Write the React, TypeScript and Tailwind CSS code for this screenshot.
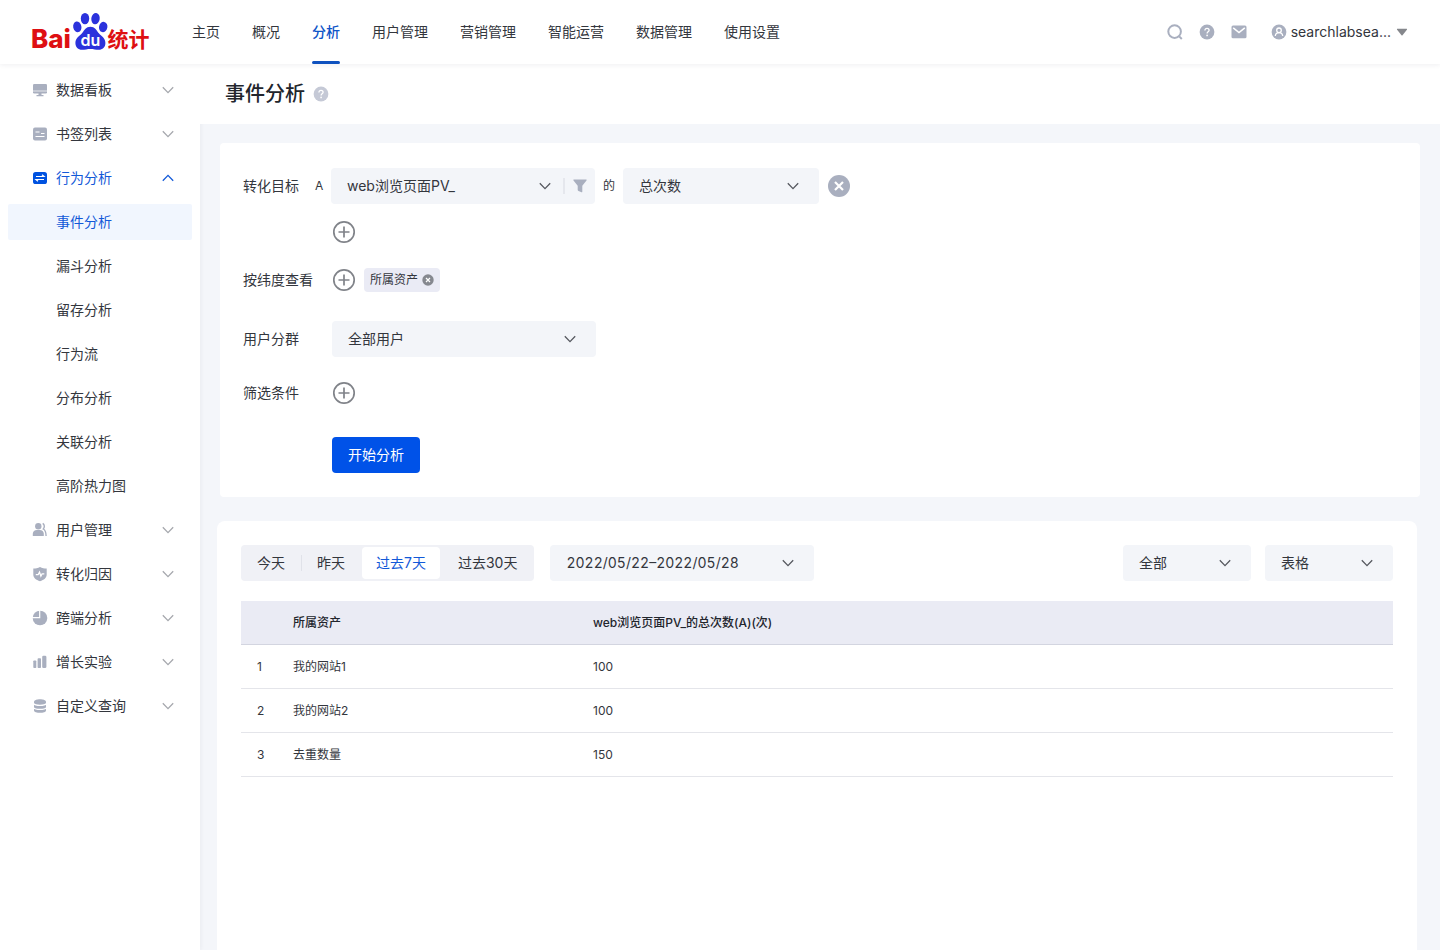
import React, { useState } from 'react';

type IconProps = { className?: string };

const pageFont = "font-['Inter','Noto_Sans_CJK_SC',sans-serif]";

function Logo() {
  return (
    <svg width="122" height="44" viewBox="-3 -1 122 44" role="img" aria-label="Baidu统计" className="shrink-0">
      <text x="-1" y="37" fontFamily="Inter, sans-serif" fontSize="26" fontWeight="800" fill="#de0f12">Bai</text>
      <g fill="#2b32dc" transform="translate(0 1)">
        <ellipse cx="45.300" cy="14.800" rx="4.100" ry="5.400" transform="rotate(-12 45.300 14.800)" />
        <ellipse cx="53" cy="6.600" rx="4.200" ry="5.700" />
        <ellipse cx="63.500" cy="6.600" rx="4.200" ry="5.700" transform="rotate(8 63.500 6.600)" />
        <ellipse cx="71.200" cy="15" rx="4.200" ry="5.200" transform="rotate(12 71.200 15)" />
        <path d="M58.400 14.800c4.400 0 6 3.500 8.200 6.200 2.800 3.200 6.800 5 6.800 10 0 4.400-3 6.800-6.600 6.800-3 0-5.200-.8-8.400-.8s-5.400.8-8.400.8c-3.800 0-6.600-2.600-6.600-6.800 0-5 4-6.800 6.800-10 2.200-2.700 3.800-6.200 8.200-6.200z" />
      </g>
      <text x="58.500" y="35" textAnchor="middle" fontFamily="Inter, sans-serif" fontSize="16" fontWeight="600" fill="#fff">du</text>
      <text x="75.500" y="36" fontFamily="Noto Sans CJK SC, sans-serif" fontSize="21" fontWeight="700" fill="#de0f12">统计</text>
    </svg>
  );
}

function Chevron({ className = '' }: IconProps) {
  return (
    <svg width="12" height="8" viewBox="0 0 12 8" fill="none" stroke="currentColor" strokeWidth="1.300" aria-hidden="true" className={className}>
      <path d="M.8 1.200 6 6.600l5.200-5.400" />
    </svg>
  );
}

function HelpIcon({ className = '' }: IconProps) {
  return (
    <svg width="16" height="16" viewBox="0 0 16 16" aria-hidden="true" className={className}>
      <circle cx="8" cy="8" r="7.400" fill="currentColor" />
      <path d="M5.900 6.500c0-1.300.9-2.100 2.100-2.100s2.100.8 2.100 1.900c0 1.500-2 1.600-2 3.100" fill="none" stroke="#fff" strokeWidth="1.300" />
      <circle cx="8.100" cy="11.400" r=".85" fill="#fff" />
    </svg>
  );
}

function SearchIcon() {
  return (
    <svg width="16" height="16" viewBox="0 0 16 16" fill="none" stroke="currentColor" strokeWidth="2" aria-hidden="true">
      <circle cx="7.600" cy="7.600" r="6.300" />
      <path d="m12.200 12.400 2.600 2.600" />
    </svg>
  );
}

function MailIcon() {
  return (
    <svg width="16" height="16" viewBox="0 0 16 16" aria-hidden="true">
      <rect x=".5" y="1.500" width="15" height="12.800" rx="1.500" fill="currentColor" />
      <path d="m2.200 3.800 5.800 4.800 5.800-4.800" fill="none" stroke="#fff" strokeWidth="1.500" />
    </svg>
  );
}

function UserIcon() {
  return (
    <svg width="16" height="16" viewBox="0 0 16 16" aria-hidden="true">
      <circle cx="8" cy="8" r="7.400" fill="currentColor" />
      <g fill="none" stroke="#fff" strokeWidth="1.300">
        <circle cx="8" cy="6.300" r="2.300" />
        <path d="M4.300 12c.2-2 1.700-3.300 3.700-3.300s3.500 1.300 3.700 3.300" />
      </g>
    </svg>
  );
}

const sideIcons: Record<string, React.ReactNode> = {
  board: (
    <>
      <rect x="1" y="2" width="14" height="9.500" rx="1.300" fill="currentColor" />
      <path d="M1 9h14" stroke="#fff" strokeWidth=".7" />
      <path d="M6.500 11h3v2h2v1.300h-7V13h2z" fill="currentColor" />
    </>
  ),
  bookmark: (
    <>
      <rect x="1" y="1.500" width="14" height="13" rx="2" fill="currentColor" />
      <path d="M3.500 6h4M9 7.500h3.500M3.500 10.500h9" stroke="#fff" strokeWidth="1.200" />
    </>
  ),
  behavior: (
    <>
      <rect x="1" y="2" width="14" height="12" rx="2.600" fill="currentColor" />
      <path d="M4 6.500h8L10 4.800M12 9.500H4l2 1.700" fill="none" stroke="#fff" strokeWidth="1.200" />
    </>
  ),
  users: (
    <>
      <circle cx="6.300" cy="4.300" r="3.200" fill="currentColor" />
      <path d="M.8 14v-2.200c0-2.300 1.800-3.700 4-3.700h3c2.200 0 4 1.400 4 3.700V14z" fill="currentColor" />
      <path d="M10.700 1.400c2 1.300 2.100 3.900.6 5.600 1.900 1 2.700 2.500 2.800 7" fill="none" stroke="currentColor" strokeWidth="1.400" />
    </>
  ),
  shield: (
    <>
      <path d="M8 .9c2.200 1.200 4.300 1.700 6.700 1.700v6c0 3.500-2.700 5.300-6.700 6.700-4-1.400-6.700-3.200-6.700-6.700v-6C3.700 2.600 5.800 2.100 8 .9z" fill="currentColor" />
      <path d="M3.800 8.700h2.300l1.400-2.500 1.400 4 1.200-2.400h2.200" fill="none" stroke="#fff" strokeWidth="1.300" />
    </>
  ),
  pie: (
    <>
      <circle cx="8" cy="8" r="7.300" fill="currentColor" />
      <path d="M7.700 0v7.700H0" fill="none" stroke="#fff" strokeWidth="1.200" />
    </>
  ),
  bars: (
    <g fill="currentColor">
      <rect x="1.300" y="6.500" width="3" height="7.500" rx=".8" />
      <rect x="5.600" y="4.300" width="3.400" height="9.700" rx=".8" />
      <rect x="10.200" y="1.800" width="4.200" height="12.200" rx="1.300" />
    </g>
  ),
  database: (
    <>
      <path d="M2 3.800C2 .4 14 .4 14 3.800v8.600c0 3.200-12 3.200-12 0z" fill="currentColor" />
      <path d="M1.500 5.500c2 2.400 11 2.400 13 0M1.500 9.600c2 2.400 11 2.400 13 0" fill="none" stroke="#fff" strokeWidth="1.200" />
    </>
  ),
};

function MenuRow({ icon, label, open = false }: { icon: string; label: string; open?: boolean }) {
  return (
    <button
      type="button"
      aria-expanded={open}
      className={`flex h-11 w-full items-center gap-2 pr-[26px] pl-8 text-sm ${open ? 'text-[#1259d8]' : 'text-[#33363d]'}`}
    >
      <svg width="16" height="16" viewBox="0 0 16 16" aria-hidden="true" className={open ? 'text-[#0052e0]' : 'text-[#a9afbf]'}>
        {sideIcons[icon]}
      </svg>
      {label}
      <Chevron className={open ? 'ml-auto rotate-180' : 'ml-auto text-[#a6a8ae]'} />
    </button>
  );
}

function Select({ label, options, className = '' }: { label: string; options: string[]; className?: string }) {
  return (
    <span className={`relative flex h-9 items-center rounded bg-[#f3f5f9] ${className}`}>
      <select aria-label={label} className="h-full w-full appearance-none rounded bg-transparent pr-10 pl-4 text-sm text-[#33363d] tabular-nums">
        {options.map((o) => (
          <option key={o}>{o}</option>
        ))}
      </select>
      <Chevron className="pointer-events-none absolute right-5 text-[#55585f]" />
    </span>
  );
}

function AddButton({ label }: { label: string }) {
  return (
    <button type="button" aria-label={label} className="size-6 text-[#808389]">
      <svg width="24" height="24" viewBox="0 0 24 24" fill="none" stroke="currentColor" strokeWidth="1.700" aria-hidden="true">
        <circle cx="12" cy="12" r="10.200" />
        <path d="M12 6.500v11M6.500 12h11" />
      </svg>
    </button>
  );
}

const nav = ['主页', '概况', '分析', '用户管理', '营销管理', '智能运营', '数据管理', '使用设置'];
const subItems = ['事件分析', '漏斗分析', '留存分析', '行为流', '分布分析', '关联分析', '高阶热力图'];
const rows = [
  ['1', '我的网站1', '100'],
  ['2', '我的网站2', '100'],
  ['3', '去重数量', '150'],
];
const ranges = [
  { name: '今天', pad: 'px-4' },
  { name: '昨天', pad: 'pr-4 pl-[15px]' },
  { name: '过去7天', pad: 'px-3.5' },
  { name: '过去30天', pad: 'px-[17px]' },
];

function Header() {
  return (
    <header className="z-10 flex h-16 shrink-0 items-center bg-white pr-8 pl-[29px] shadow-[0_1px_5px_rgba(30,30,50,0.07)]">
      <a href="#home" className="shrink-0"><Logo /></a>
      <nav className="ml-[41px] flex h-full gap-8 text-sm whitespace-nowrap">
        {nav.map((n) => {
          const active = n === '分析';
          return (
            <a key={n} href="#nav" className={`flex flex-col ${active ? 'font-medium text-[#0f55c8]' : 'text-[#33363d]'}`}>
              <span className="flex flex-1 items-center pt-[3px]">{n}</span>
              <span className={`h-[3px] rounded-full ${active ? 'bg-[#0f52bf]' : ''}`} />
            </a>
          );
        })}
      </nav>
      <div className="ml-auto flex items-center gap-4 text-[#a9afbf]">
        <button type="button" aria-label="搜索"><SearchIcon /></button>
        <button type="button" aria-label="帮助"><HelpIcon /></button>
        <button type="button" aria-label="消息"><MailIcon /></button>
        <button type="button" className="ml-2 flex items-center gap-1 text-sm">
          <UserIcon />
          <span className="text-[#33363d]">searchlabsea...</span>
          <svg width="12" height="8" viewBox="0 0 12 8" aria-hidden="true" className="ml-px text-[#85878c]">
            <path d="M1.500.8h9c.5 0 .7.500.4.9L6.500 7.200c-.3.300-.7.300-1 0L1.100 1.700C.8 1.300 1 .8 1.500.8z" fill="currentColor" />
          </svg>
        </button>
      </div>
    </header>
  );
}

function Sidebar() {
  return (
    <aside className="w-[200px] shrink-0 bg-white pt-1 shadow-[1px_0_4px_rgba(30,30,60,0.05)]">
      <MenuRow icon="board" label="数据看板" />
      <MenuRow icon="bookmark" label="书签列表" />
      <MenuRow icon="behavior" label="行为分析" open />
      <ul className="px-2 text-sm">
        {subItems.map((s, i) => (
          <li key={s} className="flex h-11 items-center">
            <a
              href="#item"
              className={`flex h-9 w-full items-center rounded-xs pl-12 ${i === 0 ? 'bg-[#f1f6fe] text-[#1259d8]' : 'text-[#33363d]'}`}
            >
              {s}
            </a>
          </li>
        ))}
      </ul>
      <MenuRow icon="users" label="用户管理" />
      <MenuRow icon="shield" label="转化归因" />
      <MenuRow icon="pie" label="跨端分析" />
      <MenuRow icon="bars" label="增长实验" />
      <MenuRow icon="database" label="自定义查询" />
    </aside>
  );
}

function QueryPanel() {
  return (
    <section className="mx-5 mt-[19px] rounded bg-white pt-[25px] pr-6 pb-6 pl-[23px] text-sm text-[#33363d]">
      <div className="flex items-center">
        <span className="w-[72px]">转化目标</span>
        <span className="w-4 text-xs">A</span>
        <div className="flex h-9 w-[264px] items-center rounded bg-[#f3f5f9]">
          <span className="relative flex h-full flex-1 items-center">
            <select aria-label="转化目标" className="h-full w-full appearance-none bg-transparent pr-8 pl-4 text-sm">
              <option>web浏览页面PV_</option>
            </select>
            <Chevron className="pointer-events-none absolute right-3 text-[#55585f]" />
          </span>
          <span className="h-4 w-0.5 bg-[#e5e7ed]" />
          <button type="button" aria-label="筛选" className="mr-2 ml-2 text-[#a9afbf]">
            <svg width="14" height="14" viewBox="0 0 14 14" aria-hidden="true">
              <path d="M1 .5h12c.6 0 .8.6.5 1L9.300 6.800v6c0 .4-.4.700-.8.500l-3-1.200c-.5-.2-.8-.5-.8-1V6.800L.5 1.500C.2 1.100.4.5 1 .5z" fill="currentColor" />
            </svg>
          </button>
        </div>
        <span className="px-2 text-xs">的</span>
        <Select label="指标" options={['总次数']} className="w-[196px]" />
        <button type="button" aria-label="删除" className="ml-2">
          <svg width="24" height="24" viewBox="0 0 24 24" aria-hidden="true">
            <circle cx="12" cy="12" r="11" fill="#a9afbf" />
            <path d="m8 8 8 8m0-8-8 8" stroke="#fff" strokeWidth="2.200" />
          </svg>
        </button>
      </div>
      <div className="mt-4 flex pl-[89px]"><AddButton label="添加转化目标" /></div>
      <div className="mt-6 flex h-6 items-center">
        <span className="w-[89px]">按纬度查看</span>
        <AddButton label="添加纬度" />
        <span className="ml-2 flex h-6 items-center gap-1 rounded bg-[#eaebf5] px-1.5 text-xs">
          所属资产
          <button type="button" aria-label="移除所属资产">
            <svg width="12" height="12" viewBox="0 0 12 12" aria-hidden="true">
              <circle cx="6" cy="6" r="5.700" fill="#85888f" />
              <path d="m4 4 4 4m0-4L4 8" stroke="#fff" strokeWidth="1.200" />
            </svg>
          </button>
        </span>
      </div>
      <div className="mt-[29px] flex items-center">
        <span className="w-[89px]">用户分群</span>
        <Select label="用户分群" options={['全部用户']} className="w-[264px]" />
      </div>
      <div className="mt-6 flex h-6 items-center">
        <span className="w-[89px]">筛选条件</span>
        <AddButton label="添加筛选条件" />
      </div>
      <div className="mt-8 flex pl-[89px]">
        <button type="button" className="h-9 rounded bg-[#0052e8] px-4 text-white">开始分析</button>
      </div>
    </section>
  );
}

function ResultPanel() {
  const [range, setRange] = useState('过去7天');
  return (
    <section className="mt-6 mr-[23px] ml-[17px] flex-1 rounded-t-lg bg-white p-6 text-[#33363d]">
      <div className="flex items-center">
        <div className="flex h-9 items-center rounded bg-[#f0f1f6] text-sm">
          {ranges.map((r, i) => (
            <React.Fragment key={r.name}>
              {i > 0 && <span className={`h-4 w-px ${i === 1 ? 'bg-[#e0e2e9]' : ''}`} />}
              <button
                type="button"
                aria-pressed={range === r.name}
                onClick={() => setRange(r.name)}
                className={`h-8 rounded ${r.pad} ${range === r.name ? 'bg-white text-[#1259d8]' : ''}`}
              >
                {r.name}
              </button>
            </React.Fragment>
          ))}
        </div>
        <Select label="日期范围" options={['2022/05/22–2022/05/28']} className="ml-4 w-[264px]" />
        <div className="ml-auto flex gap-3.5">
          <Select label="范围" options={['全部']} className="w-32" />
          <Select label="展示方式" options={['表格']} className="w-32" />
        </div>
      </div>
      <table className="mt-5 w-full table-fixed border-separate border-spacing-0 text-left text-xs">
        <colgroup>
          <col className="w-9" />
          <col className="w-[300px]" />
          <col />
        </colgroup>
        <thead>
          <tr className="h-11 bg-[#eaebf4] text-[#22252c]">
            <th className="border-b border-[#d3d5e0]" />
            <th className="border-b border-[#d3d5e0] pl-4 font-medium">所属资产</th>
            <th className="border-b border-[#d3d5e0] pl-4 font-medium">web浏览页面PV_的总次数(A)(次)</th>
          </tr>
        </thead>
        <tbody>
          {rows.map((r) => (
            <tr key={r[0]} className="h-11">
              {r.map((c, i) => (
                <td key={i} className="border-b border-[#e4e5ea] pl-4">{c}</td>
              ))}
            </tr>
          ))}
        </tbody>
      </table>
    </section>
  );
}

export default function App() {
  return (
    <div className={`flex min-h-screen flex-col bg-[#f4f6fa] ${pageFont}`} lang="zh-CN">
      <Header />
      <div className="flex flex-1">
        <Sidebar />
        <main className="flex min-w-0 flex-1 flex-col">
          <div className="flex h-[60px] shrink-0 items-center gap-2 bg-white pl-[25px]">
            <h1 className="text-xl font-medium text-[#22252c]">事件分析</h1>
            <button type="button" aria-label="说明" className="text-[#c5c9d6]"><HelpIcon /></button>
          </div>
          <QueryPanel />
          <ResultPanel />
        </main>
      </div>
    </div>
  );
}
